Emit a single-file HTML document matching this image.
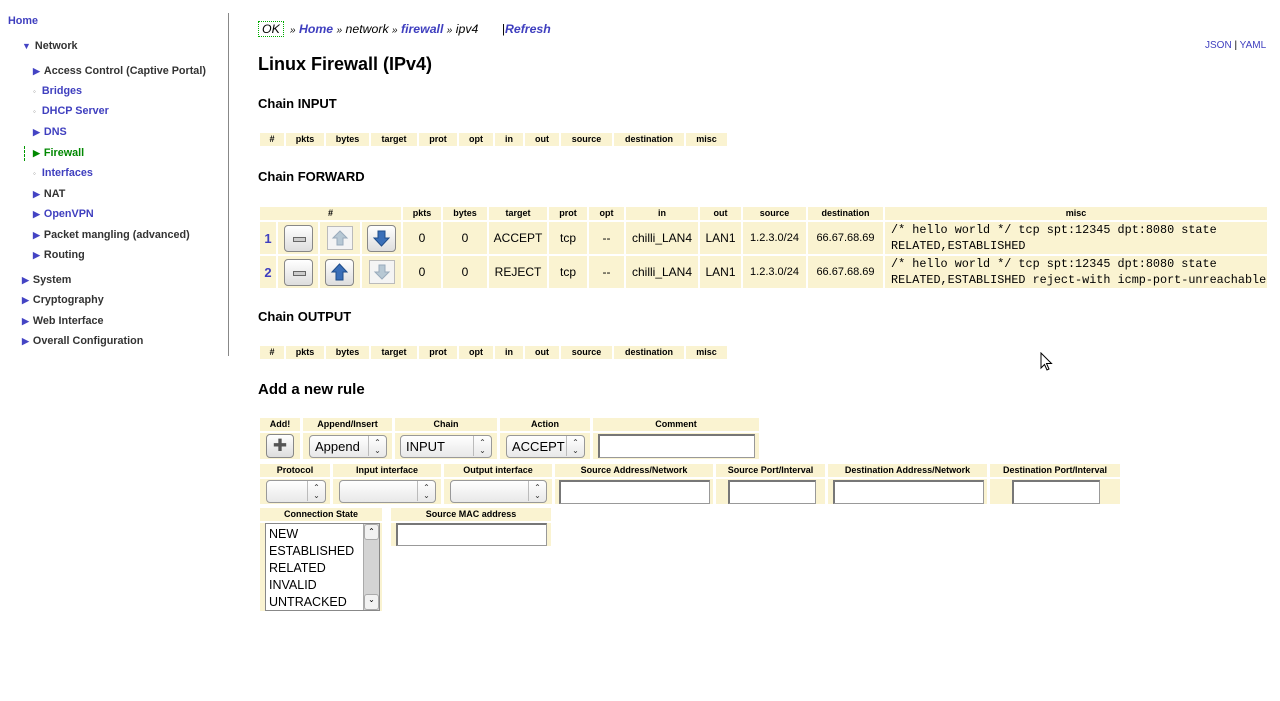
<!DOCTYPE html>
<html><head><meta charset="utf-8"><style>
body{margin:0;width:1280px;height:701px;background:#fff;font-family:"Liberation Sans",sans-serif;position:relative;overflow:hidden;color:#000}
.a{position:absolute;white-space:nowrap}
.n{font-size:10.8px;font-weight:bold;color:#333}
.l{color:#3f3fbf}
.tri{color:#4444c4;font-size:9px;margin-right:4px}
.h{position:absolute;background:#faf3d1;font-size:9px;font-weight:bold;text-align:center;height:13px;line-height:13px}
.c{position:absolute;background:#faf3d1;font-size:12px;display:flex;align-items:center;justify-content:center}
.mono{font-family:"Liberation Mono",monospace;font-size:11.8px;line-height:16px;justify-content:flex-start;padding-left:6px;box-sizing:border-box;white-space:nowrap}
.btn{position:absolute;border:1px solid #888;border-radius:4px;background:linear-gradient(#fff,#ddd);box-sizing:border-box}
.sel{position:absolute;border:1px solid #999;border-radius:4px;background:linear-gradient(#fff,#e8e8e8);box-sizing:border-box;font-size:13px;line-height:22px;padding-left:5px}
.sel:after{content:"⌃\A⌄";white-space:pre;position:absolute;right:0;top:0;width:18px;height:20px;border-left:1px solid #bbb;font-size:8px;line-height:8px;text-align:center;padding-top:3px;box-sizing:border-box;color:#333}
.inp{position:absolute;background:#fff;border:1px solid #999;border-top:2px solid #777;border-left:2px solid #777;box-sizing:border-box}
</style></head><body>
<div style="position:absolute;left:228px;top:13px;width:1px;height:343px;background:#888"></div>
<div class="a n l" style="left:8px;top:15px">Home</div>
<div class="a n" style="left:22px;top:40px"><span class="tri">▼</span>Network</div>
<div class="a n" style="left:33px;top:65px"><span class="tri">▶</span>Access Control (Captive Portal)</div>
<div class="a n" style="left:33px;top:85px"><span style="color:#888;font-size:8px;margin-right:6px">◦</span><span class="l">Bridges</span></div>
<div class="a n" style="left:33px;top:105px"><span style="color:#888;font-size:8px;margin-right:6px">◦</span><span class="l">DHCP Server</span></div>
<div class="a n" style="left:33px;top:126px"><span class="tri">▶</span><span class="l">DNS</span></div>
<div style="position:absolute;left:24px;top:146px;height:15px;border-left:1px dashed #090"></div>
<div class="a n" style="left:33px;top:147px;color:#080"><span class="tri" style="color:#080">▶</span>Firewall</div>
<div class="a n" style="left:33px;top:167px"><span style="color:#888;font-size:8px;margin-right:6px">◦</span><span class="l">Interfaces</span></div>
<div class="a n" style="left:33px;top:188px"><span class="tri">▶</span>NAT</div>
<div class="a n" style="left:33px;top:208px"><span class="tri">▶</span><span class="l">OpenVPN</span></div>
<div class="a n" style="left:33px;top:229px"><span class="tri">▶</span>Packet mangling (advanced)</div>
<div class="a n" style="left:33px;top:249px"><span class="tri">▶</span>Routing</div>
<div class="a n" style="left:22px;top:274px"><span class="tri">▶</span>System</div>
<div class="a n" style="left:22px;top:294px"><span class="tri">▶</span>Cryptography</div>
<div class="a n" style="left:22px;top:315px"><span class="tri">▶</span>Web Interface</div>
<div class="a n" style="left:22px;top:335px"><span class="tri">▶</span>Overall Configuration</div>

<div class="a" style="left:258px;top:22px;font-size:12.3px;font-style:italic"><span style="border:1px dotted #0a0;padding:0 3px">OK</span> <span style="font-size:10px">&nbsp;»</span> <b class="l">Home</b> <span style="font-size:10px">»</span> network <span style="font-size:10px">»</span> <b class="l">firewall</b> <span style="font-size:10px">»</span> ipv4 <span style="margin-left:20px">|</span><b class="l">Refresh</b></div>
<div class="a" style="left:1205px;top:40px;font-size:10px"><span class="l">JSON</span> | <span class="l">YAML</span></div>
<div class="a" style="left:258px;top:54px;font-size:18px;font-weight:bold">Linux Firewall (IPv4)</div>
<div class="a" style="left:258px;top:96px;font-size:13px;font-weight:bold">Chain INPUT</div>
<div class="a" style="left:258px;top:169px;font-size:13px;font-weight:bold">Chain FORWARD</div>
<div class="a" style="left:258px;top:309px;font-size:13px;font-weight:bold">Chain OUTPUT</div>
<div class="a" style="left:258px;top:381px;font-size:15px;font-weight:bold">Add a new rule</div>

<div class="h" style="left:260px;top:133px;width:24px">#</div><div class="h" style="left:286px;top:133px;width:38px">pkts</div><div class="h" style="left:326px;top:133px;width:43px">bytes</div><div class="h" style="left:371px;top:133px;width:46px">target</div><div class="h" style="left:419px;top:133px;width:38px">prot</div><div class="h" style="left:459px;top:133px;width:34px">opt</div><div class="h" style="left:495px;top:133px;width:28px">in</div><div class="h" style="left:525px;top:133px;width:34px">out</div><div class="h" style="left:561px;top:133px;width:51px">source</div><div class="h" style="left:614px;top:133px;width:70px">destination</div><div class="h" style="left:686px;top:133px;width:41px">misc</div>
<div class="h" style="left:260px;top:346px;width:24px">#</div><div class="h" style="left:286px;top:346px;width:38px">pkts</div><div class="h" style="left:326px;top:346px;width:43px">bytes</div><div class="h" style="left:371px;top:346px;width:46px">target</div><div class="h" style="left:419px;top:346px;width:38px">prot</div><div class="h" style="left:459px;top:346px;width:34px">opt</div><div class="h" style="left:495px;top:346px;width:28px">in</div><div class="h" style="left:525px;top:346px;width:34px">out</div><div class="h" style="left:561px;top:346px;width:51px">source</div><div class="h" style="left:614px;top:346px;width:70px">destination</div><div class="h" style="left:686px;top:346px;width:41px">misc</div>

<div class="h" style="left:260px;top:207px;width:141px">#</div><div class="h" style="left:403px;top:207px;width:38px">pkts</div><div class="h" style="left:443px;top:207px;width:44px">bytes</div><div class="h" style="left:489px;top:207px;width:58px">target</div><div class="h" style="left:549px;top:207px;width:38px">prot</div><div class="h" style="left:589px;top:207px;width:35px">opt</div><div class="h" style="left:626px;top:207px;width:72px">in</div><div class="h" style="left:700px;top:207px;width:41px">out</div><div class="h" style="left:743px;top:207px;width:63px">source</div><div class="h" style="left:808px;top:207px;width:75px">destination</div><div class="h" style="left:885px;top:207px;width:382px">misc</div>

<div class="c" style="left:260px;top:222px;width:16px;height:32px;font-weight:bold;font-size:13px;color:#3f3fbf">1</div>
<div class="c" style="left:278px;top:222px;width:40px;height:32px"></div><div class="btn" style="left:284px;top:225px;width:29px;height:27px"><div style="position:absolute;left:8px;top:11px;width:11px;height:3px;border:1px solid #666;background:#ccc"></div></div>
<div class="c" style="left:320px;top:222px;width:40px;height:32px"><svg width="26" height="24"><rect x=".5" y=".5" width="25" height="23" fill="#f4f4f4" stroke="#bbb"/><path d="M13 5 L20 12 H16 V19 H10 V12 H6 Z" fill="#b7c8d4" stroke="#9ab"/></svg></div>
<div class="c" style="left:362px;top:222px;width:39px;height:32px"></div><div class="btn" style="left:367px;top:225px;width:29px;height:27px"><svg width="27" height="25" style="position:absolute;left:0;top:0"><path d="M10 5 H17 V12 H21 L13.5 20 L6 12 H10 Z" fill="#3a6fb8" stroke="#1f4d8a"/></svg></div>
<div class="c" style="left:403px;top:222px;width:38px;height:32px">0</div><div class="c" style="left:443px;top:222px;width:44px;height:32px">0</div><div class="c" style="left:489px;top:222px;width:58px;height:32px">ACCEPT</div><div class="c" style="left:549px;top:222px;width:38px;height:32px">tcp</div><div class="c" style="left:589px;top:222px;width:35px;height:32px">--</div><div class="c" style="left:626px;top:222px;width:72px;height:32px">chilli_LAN4</div><div class="c" style="left:700px;top:222px;width:41px;height:32px">LAN1</div><div class="c" style="left:743px;top:222px;width:63px;height:32px;font-size:11px">1.2.3.0/24</div><div class="c" style="left:808px;top:222px;width:75px;height:32px;font-size:11px">66.67.68.69</div>
<div class="c mono" style="left:885px;top:222px;width:382px;height:32px">/* hello world */ tcp spt:12345 dpt:8080 state<br>RELATED,ESTABLISHED</div>

<div class="c" style="left:260px;top:256px;width:16px;height:32px;font-weight:bold;font-size:13px;color:#3f3fbf">2</div>
<div class="c" style="left:278px;top:256px;width:40px;height:32px"></div><div class="btn" style="left:284px;top:259px;width:29px;height:27px"><div style="position:absolute;left:8px;top:11px;width:11px;height:3px;border:1px solid #666;background:#ccc"></div></div>
<div class="c" style="left:320px;top:256px;width:40px;height:32px"></div><div class="btn" style="left:325px;top:259px;width:29px;height:27px"><svg width="27" height="25" style="position:absolute;left:0;top:0"><path d="M13.5 4 L21 12 H17 V20 H10 V12 H6 Z" fill="#3a6fb8" stroke="#1f4d8a"/></svg></div>
<div class="c" style="left:362px;top:256px;width:39px;height:32px"><svg width="26" height="24"><rect x=".5" y=".5" width="25" height="23" fill="#f4f4f4" stroke="#bbb"/><path d="M10 5 H16 V12 H20 L13 19 L6 12 H10 Z" fill="#b7c8d4" stroke="#9ab"/></svg></div>
<div class="c" style="left:403px;top:256px;width:38px;height:32px">0</div><div class="c" style="left:443px;top:256px;width:44px;height:32px">0</div><div class="c" style="left:489px;top:256px;width:58px;height:32px">REJECT</div><div class="c" style="left:549px;top:256px;width:38px;height:32px">tcp</div><div class="c" style="left:589px;top:256px;width:35px;height:32px">--</div><div class="c" style="left:626px;top:256px;width:72px;height:32px">chilli_LAN4</div><div class="c" style="left:700px;top:256px;width:41px;height:32px">LAN1</div><div class="c" style="left:743px;top:256px;width:63px;height:32px;font-size:11px">1.2.3.0/24</div><div class="c" style="left:808px;top:256px;width:75px;height:32px;font-size:11px">66.67.68.69</div>
<div class="c mono" style="left:885px;top:256px;width:382px;height:32px">/* hello world */ tcp spt:12345 dpt:8080 state<br>RELATED,ESTABLISHED reject-with icmp-port-unreachable</div>

<div class="h" style="left:260px;top:418px;width:40px">Add!</div><div class="h" style="left:303px;top:418px;width:89px">Append/Insert</div><div class="h" style="left:395px;top:418px;width:102px">Chain</div><div class="h" style="left:500px;top:418px;width:90px">Action</div><div class="h" style="left:593px;top:418px;width:166px">Comment</div>
<div class="c" style="left:260px;top:433px;width:40px;height:26px"></div><div class="c" style="left:303px;top:433px;width:89px;height:26px"></div><div class="c" style="left:395px;top:433px;width:102px;height:26px"></div><div class="c" style="left:500px;top:433px;width:90px;height:26px"></div><div class="c" style="left:593px;top:433px;width:166px;height:26px"></div>
<div class="btn" style="left:266px;top:434px;width:28px;height:24px;text-align:center;font-size:17px;line-height:21px;color:#555">✚</div>
<div class="sel" style="left:309px;top:435px;width:78px;height:23px">Append</div>
<div class="sel" style="left:400px;top:435px;width:92px;height:23px">INPUT</div>
<div class="sel" style="left:506px;top:435px;width:79px;height:23px">ACCEPT</div>
<div class="inp" style="left:598px;top:434px;width:157px;height:24px"></div>
<div class="h" style="left:260px;top:464px;width:70px">Protocol</div><div class="h" style="left:333px;top:464px;width:108px">Input interface</div><div class="h" style="left:444px;top:464px;width:108px">Output interface</div><div class="h" style="left:555px;top:464px;width:158px">Source Address/Network</div><div class="h" style="left:716px;top:464px;width:109px">Source Port/Interval</div><div class="h" style="left:828px;top:464px;width:159px">Destination Address/Network</div><div class="h" style="left:990px;top:464px;width:130px">Destination Port/Interval</div>
<div class="c" style="left:260px;top:479px;width:70px;height:25px"></div><div class="c" style="left:333px;top:479px;width:108px;height:25px"></div><div class="c" style="left:444px;top:479px;width:108px;height:25px"></div><div class="c" style="left:555px;top:479px;width:158px;height:25px"></div><div class="c" style="left:716px;top:479px;width:109px;height:25px"></div><div class="c" style="left:828px;top:479px;width:159px;height:25px"></div><div class="c" style="left:990px;top:479px;width:130px;height:25px"></div>
<div class="sel" style="left:266px;top:480px;width:60px;height:23px"></div>
<div class="sel" style="left:339px;top:480px;width:97px;height:23px"></div>
<div class="sel" style="left:450px;top:480px;width:97px;height:23px"></div>
<div class="inp" style="left:559px;top:480px;width:151px;height:24px"></div>
<div class="inp" style="left:728px;top:480px;width:88px;height:24px"></div>
<div class="inp" style="left:833px;top:480px;width:151px;height:24px"></div>
<div class="inp" style="left:1012px;top:480px;width:88px;height:24px"></div>
<div class="h" style="left:260px;top:508px;width:122px">Connection State</div><div class="h" style="left:391px;top:508px;width:160px">Source MAC address</div>
<div class="c" style="left:260px;top:523px;width:122px;height:88px"></div><div class="c" style="left:391px;top:523px;width:160px;height:23px"></div>
<div style="position:absolute;left:265px;top:523px;width:115px;height:88px;background:#fff;border:1px solid #888;box-sizing:border-box;font-size:12.5px;line-height:17px;padding:2px 0 0 3px">NEW<br>ESTABLISHED<br>RELATED<br>INVALID<br>UNTRACKED
<div style="position:absolute;right:0;top:0;width:15px;height:86px;background:#d4d4d4;border-left:1px solid #aaa"><div style="height:14px;background:#f2f2f2;border:1px solid #aaa;border-radius:3px;font-size:8px;text-align:center;line-height:14px">⌃</div><div style="position:absolute;bottom:0;width:13px;height:14px;background:#f2f2f2;border:1px solid #aaa;border-radius:3px;font-size:8px;text-align:center;line-height:10px">⌄</div></div></div>
<div class="inp" style="left:396px;top:523px;width:151px;height:23px"></div>
<svg style="position:absolute;left:1040px;top:352px" width="14" height="20"><path d="M1 1 V16 L4.5 12.5 L7 18 L9 17 L6.5 11.5 H11.5 Z" fill="#fff" stroke="#000"/></svg>
</body></html>
